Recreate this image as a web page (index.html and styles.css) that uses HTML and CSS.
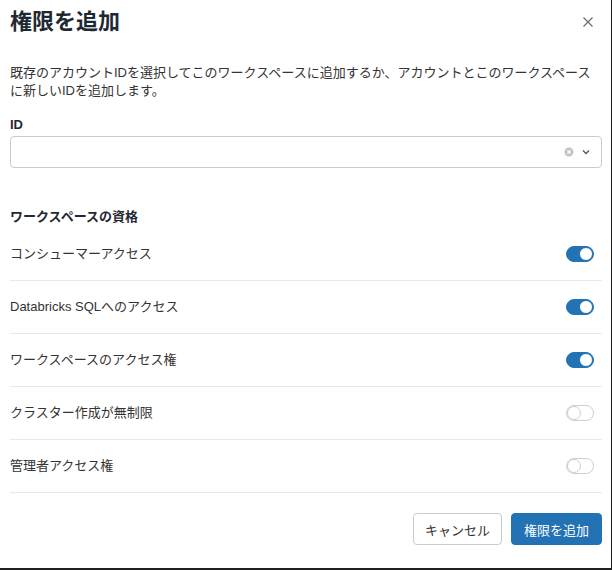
FILE: index.html
```html
<!DOCTYPE html>
<html lang="ja">
<head>
  <meta charset="UTF-8" />
  <meta name="viewport" content="width=device-width, initial-scale=1.0" />
  <title>権限を追加</title>
  <link rel="stylesheet" href="styles.css">
</head>

<body>
  <div class="dialog">
    <header class="dialog-header">
      <h1>権限を追加</h1>
      <button class="close" aria-label="閉じる">
        <svg width="16" height="16" viewBox="0 0 16 16">
          <path d="M3.5 3.5 L12.5 12.5 M12.5 3.5 L3.5 12.5" stroke="#6f6f6f" stroke-width="1.3" fill="none" />
        </svg>
      </button>
    </header>

    <p class="desc">既存のアカウントIDを選択してこのワークスペースに追加するか、アカウントとこのワークスペースに新しいIDを追加します。</p>

    <label class="field-label" for="id-select">ID</label>
    <div class="select" id="id-select">
      <span class="select-value"></span>
      <span class="clear">
        <svg width="10" height="10" viewBox="0 0 10 10">
          <circle cx="5" cy="5" r="4.5" fill="#c4c4c4" />
          <path d="M3.4 3.4 L6.6 6.6 M6.6 3.4 L3.4 6.6" stroke="#fff" stroke-width="1.2" />
        </svg>
      </span>
      <span class="chevron">
        <svg width="10" height="10" viewBox="0 0 10 10">
          <path d="M2 3.5 L5 6.5 L8 3.5" stroke="#555" stroke-width="1.3" fill="none" />
        </svg>
      </span>
    </div>

    <h2 class="section-title">ワークスペースの資格</h2>
    <ul class="entitlements">
      <li><span>コンシューマーアクセス</span><span class="toggle on"></span></li>
      <li><span>Databricks SQLへのアクセス</span><span class="toggle on"></span></li>
      <li><span>ワークスペースのアクセス権</span><span class="toggle on"></span></li>
      <li><span>クラスター作成が無制限</span><span class="toggle"></span></li>
      <li><span>管理者アクセス権</span><span class="toggle"></span></li>
    </ul>

    <footer class="dialog-footer">
      <button class="btn">キャンセル</button>
      <button class="btn btn-primary">権限を追加</button>
    </footer>
  </div>
</body>
</html>
```

FILE: styles.css
```css
body {
  margin: 0;
  background: #1f1f1f;
  font-family: 'Liberation Sans', 'Noto Sans CJK JP', sans-serif;
  color: #1f2933;
}

.dialog {
  width: 611px;
  height: 568px;
  box-sizing: border-box;
  background: white;
  padding: 0 9px 0 10px;
}

.dialog-header {
  height: 44px;
  display: flex;
  align-items: center;
  justify-content: space-between;
}

.dialog-header h1 {
  margin: 0;
  font-size: 22px;
  line-height: 28px;
  font-weight: bold;
  color: #1f2933;
}

.close {
  border: none;
  background: none;
  padding: 0;
  margin-right: 6px;
  width: 16px;
  height: 16px;
  display: flex;
}

.desc {
  margin: 20px 0 0;
  font-size: 13px;
  line-height: 18px;
  color: #333;
}

.field-label {
  display: block;
  margin-top: 16px;
  font-size: 13px;
  line-height: 18px;
  font-weight: bold;
}

.select {
  margin-top: 2px;
  height: 32px;
  box-sizing: border-box;
  border: 1px solid #cbcbcb;
  border-radius: 4px;
  display: flex;
  align-items: center;
  padding: 0 10px 0 8px;
  gap: 7px;
}

.select-value {
  flex: 1;
}

.clear,
.chevron {
  display: flex;
}

.section-title {
  margin: 40px 0 2px;
  font-size: 13px;
  line-height: 18px;
  font-weight: bold;
}

.entitlements {
  list-style: none;
  margin: 0;
  padding: 0;
}

.entitlements li {
  height: 52px;
  border-bottom: 1px solid #e8e8e8;
  display: flex;
  align-items: center;
  justify-content: space-between;
  font-size: 13px;
  line-height: 18px;
  color: #333;
  padding-right: 8px;
}

.entitlements li span:first-child {
  margin-top: -1px;
}

.toggle {
  position: relative;
  width: 28px;
  height: 16px;
  box-sizing: border-box;
  border-radius: 8px;
  border: 1px solid #cfcfcf;
  background: white;
}

.toggle::after {
  content: '';
  position: absolute;
  top: 0;
  left: 0;
  width: 14px;
  height: 14px;
  box-sizing: border-box;
  border-radius: 50%;
  border: 1px solid #cfcfcf;
  background: white;
}

.toggle.on {
  background: #2272b4;
  border-color: #2272b4;
}

.toggle.on::after {
  left: 12px;
  border-color: #2272b4;
}

.dialog-footer {
  margin-top: 20px;
  display: flex;
  justify-content: flex-end;
  gap: 9px;
}

.btn {
  height: 32px;
  padding: 0 11px;
  border: 1px solid #cbcbcb;
  border-radius: 4px;
  background: white;
  color: #333;
  font-family: inherit;
  font-size: 13px;
}

.btn-primary {
  padding: 0 12px;
  background: #2272b4;
  border-color: #2272b4;
  color: white;
}
```
